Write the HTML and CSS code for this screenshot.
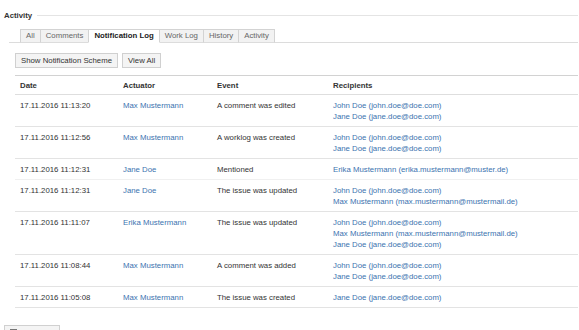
FILE: index.html
```html
<!DOCTYPE html>
<html lang="en">
<head>
    <meta charset="UTF-8"/>
    <title>Activity - Notification Log</title>
<link rel="stylesheet" href="styles.css">
</head>
<body>
    <div id="activity">
        <!-- Module heading -->
        <div class="mod-header">
            <span class="mod-title">Activity</span>
            <span class="mod-rule"></span>
        </div>

        <!-- Tabs -->
        <ul class="tabs">
            <li>All</li>
            <li>Comments</li>
            <li class="active">Notification Log</li>
            <li>Work Log</li>
            <li>History</li>
            <li>Activity</li>
        </ul>

        <div class="toolbar">
            <span class="btn">Show Notification Scheme</span>
            <span class="btn">View All</span>
        </div>

        <table class="log">
            <colgroup>
                <col class="c-date">
                <col class="c-actor">
                <col class="c-event">
                <col>
            </colgroup>
            <thead>
                <tr>
                    <th>Date</th>
                    <th>Actuator</th>
                    <th>Event</th>
                    <th>Recipients</th>
                </tr>
            </thead>
            <tbody>
                <tr>
                    <td>17.11.2016 11:13:20</td>
                    <td><a href="#">Max Mustermann</a></td>
                    <td>A comment was edited</td>
                    <td><a href="#">John Doe (john.doe@doe.com)</a><br><a href="#">Jane Doe (jane.doe@doe.com)</a></td>
                </tr>
                <tr>
                    <td>17.11.2016 11:12:56</td>
                    <td><a href="#">Max Mustermann</a></td>
                    <td>A worklog was created</td>
                    <td><a href="#">John Doe (john.doe@doe.com)</a><br><a href="#">Jane Doe (jane.doe@doe.com)</a></td>
                </tr>
                <tr class="faint">
                    <td>17.11.2016 11:12:31</td>
                    <td><a href="#">Jane Doe</a></td>
                    <td>Mentioned</td>
                    <td><a href="#">Erika Mustermann (erika.mustermann@muster.de)</a></td>
                </tr>
                <tr>
                    <td>17.11.2016 11:12:31</td>
                    <td><a href="#">Jane Doe</a></td>
                    <td>The issue was updated</td>
                    <td><a href="#">John Doe (john.doe@doe.com)</a><br><a href="#">Max Mustermann (max.mustermann@mustermail.de)</a></td>
                </tr>
                <tr>
                    <td>17.11.2016 11:11:07</td>
                    <td><a href="#">Erika Mustermann</a></td>
                    <td>The issue was updated</td>
                    <td><a href="#">John Doe (john.doe@doe.com)</a><br><a href="#">Max Mustermann (max.mustermann@mustermail.de)</a><br><a href="#">Jane Doe (jane.doe@doe.com)</a></td>
                </tr>
                <tr>
                    <td>17.11.2016 11:08:44</td>
                    <td><a href="#">Max Mustermann</a></td>
                    <td>A comment was added</td>
                    <td><a href="#">John Doe (john.doe@doe.com)</a><br><a href="#">Jane Doe (jane.doe@doe.com)</a></td>
                </tr>
                <tr>
                    <td>17.11.2016 11:05:08</td>
                    <td><a href="#">Max Mustermann</a></td>
                    <td>The issue was created</td>
                    <td><a href="#">Jane Doe (jane.doe@doe.com)</a></td>
                </tr>
            </tbody>
        </table>

        <!-- Button below the table, cut off by the window -->
        <div class="footer">
            <span class="btn btn-more"><span class="more-icon"></span></span>
        </div>
    </div>
</body>
</html>
```

FILE: styles.css
```css
* {
    margin: 0;
    padding: 0;
    box-sizing: border-box;
}

body {
    padding: 10px 1px 0 4px;
    background: #fff;
    color: #333;
    font: 7.8px/11px "Liberation Sans", Arial, sans-serif;
}

a {
    color: #3b73af;
    text-decoration: none;
}

/* Module heading with rule */
.mod-header {
    display: flex;
    align-items: center;
    height: 11px;
}

.mod-title {
    font-weight: bold;
    color: #333;
}

.mod-rule {
    flex: 1;
    height: 1px;
    margin-left: 5px;
    background: #e4e4e4;
}

/* Tabs */
.tabs {
    display: flex;
    list-style: none;
    margin: 8px 0 0 5px;
    padding-left: 11px;
    border-bottom: 1px solid #dcdcdc;
}

.tabs li {
    margin-bottom: -1px;
    margin-right: -1px;
    padding: 0 5px;
    line-height: 12px;
    border: 1px solid #d3d3d3;
    border-bottom-color: #dcdcdc;
    background: #f2f2f2;
    color: #666;
}

.tabs li.active {
    background: #fff;
    border-bottom-color: #fff;
    font-weight: bold;
    color: #222;
    position: relative;
}

/* Toolbar buttons */
.toolbar {
    display: flex;
    gap: 4px;
    margin: 10px 0 0 11px;
}

.btn {
    display: inline-block;
    padding: 0 5px;
    line-height: 13px;
    border: 1px solid #d0d0d0;
    background: #f4f4f4;
    color: #333;
}

/* Notification table */
.log {
    width: calc(100% - 11px);
    margin: 7px 0 0 11px;
    border-collapse: collapse;
    border-top: 1px solid #d2d2d2;
    border-bottom: 1px solid #cdcdcd;
}

.c-date { width: 103px; }
.c-actor { width: 94px; }
.c-event { width: 116px; }

.log th {
    padding: 4px 5px 3px;
    text-align: left;
    font-weight: bold;
    color: #333;
    border-bottom: 1px solid #dedede;
}

.log td {
    padding: 5px 5px 4px;
    vertical-align: top;
    white-space: nowrap;
    border-bottom: 1px solid #e3e3e3;
}

.log tr.faint td {
    border-bottom-color: #f0f0f0;
}

/* Cut-off button under the table */
.footer {
    margin-top: 17px;
    margin-left: 0;
}

.btn-more {
    width: 56px;
    height: 15px;
    padding: 3px 5px 0;
}

.more-icon {
    display: block;
    width: 7px;
    height: 2px;
    background: #777;
}
```
